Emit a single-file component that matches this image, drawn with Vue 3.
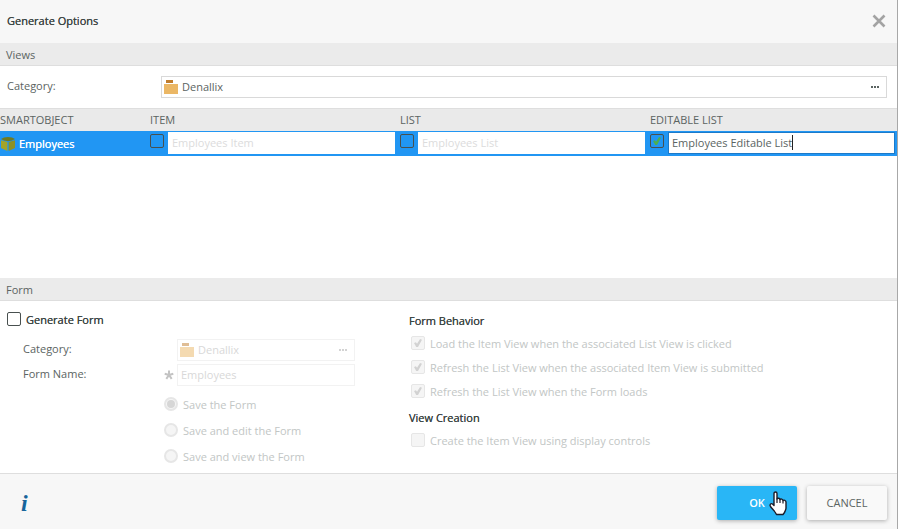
<script setup>
import { ref } from 'vue'

const columns = ref([
  { id: 'item', title: 'Item', value: 'Employees Item', checked: false },
  { id: 'list', title: 'List', value: 'Employees List', checked: false },
  { id: 'editable', title: 'Editable List', value: 'Employees Editable List', checked: true },
])
const generateForm = ref(false)
const afterSave = ref('save')
const saveOptions = [
  { id: 'save', text: 'Save the Form' },
  { id: 'edit', text: 'Save and edit the Form' },
  { id: 'view', text: 'Save and view the Form' },
]
const behaviors = ref([
  { id: 'load', text: 'Load the Item View when the associated List View is clicked', checked: true },
  { id: 'refresh-item', text: 'Refresh the List View when the associated Item View is submitted', checked: true },
  { id: 'refresh-form', text: 'Refresh the List View when the Form loads', checked: true },
])
const displayControls = ref(false)
</script>

<template>
  <main class="dialog">
    <header class="titlebar">
      <h1>Generate Options</h1>
      <button class="close" type="button" aria-label="Close">
        <svg width="14" height="14" viewBox="0 0 14 14"><path d="M1.5 1.500 12.500 12.500M12.500 1.500 1.500 12.500" fill="none" stroke="#a3a3a3" stroke-width="2.600" /></svg>
      </button>
    </header>

    <h2 class="bar">Views</h2>
    <div class="category-row">
      <label for="category">Category:</label>
      <div class="picker">
        <svg class="folder" width="14" height="14" viewBox="0 0 14 14"><path d="M2 0h7v3H2z" fill="#c17d2d" /><path d="M0 4h14v10H0z" fill="#ebb765" /></svg>
        <input id="category" type="text" value="Denallix" />
        <button type="button" aria-label="Browse categories">
          <svg width="8" height="2" viewBox="0 0 8 2"><path d="M0 0h2v2H0zM3 0h2v2H3zM6 0h2v2H6z" fill="#5b6462" /></svg>
        </button>
      </div>
    </div>

    <div class="grid">
      <table>
        <thead>
          <tr>
            <th class="first">SMARTOBJECT</th>
            <th v-for="c in columns" :key="c.id" class="view">{{ c.title.toUpperCase() }}</th>
          </tr>
        </thead>
        <tbody>
          <tr>
            <td>
              <div class="object">
                <svg width="14" height="14" viewBox="0 0 14 14">
                  <path d="M0 2 3 0.5 7 0l4 0.500L14 2 11 3.600 7 4.200 3 3.600z" fill="#6f7a22" />
                  <path d="M0 3.200 6.400 5v9L0 11z" fill="#a3a428" />
                  <path d="M14 3.200 7.600 5v9L14 11z" fill="#8d9124" />
                </svg>
                <span>Employees</span>
              </div>
            </td>
            <td v-for="c in columns" :key="c.id">
              <div class="cell">
                <input v-model="c.checked" class="check" type="checkbox" :aria-label="'Generate ' + c.title" />
                <div class="name" :class="{ active: c.checked }">
                  <input v-model="c.value" type="text" :disabled="!c.checked" :aria-label="c.title + ' name'" />
                  <span v-if="c.checked" class="caret"></span>
                </div>
              </div>
            </td>
          </tr>
        </tbody>
      </table>
    </div>

    <h2 class="bar">Form</h2>
    <div class="form-area">
      <section class="left">
        <label class="option strong">
          <input v-model="generateForm" class="check" type="checkbox" />
          <span>Generate Form</span>
        </label>
        <div class="fields">
          <div class="field">
            <label for="form-category">Category:</label>
            <span class="mark"></span>
            <div class="picker off">
              <svg class="folder" width="14" height="14" viewBox="0 0 14 14"><path d="M2 0h7v3H2z" fill="#c17d2d" /><path d="M0 4h14v10H0z" fill="#ebb765" /></svg>
              <input id="form-category" type="text" value="Denallix" disabled />
              <button type="button" disabled aria-label="Browse form categories">
                <svg width="8" height="2" viewBox="0 0 8 2"><path d="M0 0h2v2H0zM3 0h2v2H3zM6 0h2v2H6z" fill="#a8a8a8" /></svg>
              </button>
            </div>
          </div>
          <div class="field">
            <label for="form-name">Form Name:</label>
            <span class="mark">
              <svg width="10" height="10" viewBox="0 0 10 10"><path d="M5 5V.5M5 5 .7 3.700M5 5l4.300-1.300M5 5 2.300 8.800M5 5l2.700 3.800" fill="none" stroke="#c3c3c3" stroke-width="2" /></svg>
            </span>
            <div class="picker off">
              <input id="form-name" class="plain" type="text" value="Employees" disabled />
            </div>
          </div>
        </div>
        <div class="radios">
          <label v-for="o in saveOptions" :key="o.id" class="option faded">
            <input v-model="afterSave" class="radio" type="radio" name="after-save" :value="o.id" disabled />
            <span>{{ o.text }}</span>
          </label>
        </div>
      </section>

      <section class="right">
        <h3>Form Behavior</h3>
        <div class="checks">
          <label v-for="b in behaviors" :key="b.id" class="option faded">
            <input v-model="b.checked" class="check" type="checkbox" disabled />
            <span>{{ b.text }}</span>
          </label>
        </div>
        <h3>View Creation</h3>
        <div class="checks">
          <label class="option faded">
            <input v-model="displayControls" class="check" type="checkbox" disabled />
            <span>Create the Item View using display controls</span>
          </label>
        </div>
      </section>
    </div>

    <footer>
      <a class="info" href="#" aria-label="Help">i</a>
      <div class="actions">
        <button class="ok" type="button">
          OK
          <svg class="pointer" width="19" height="25" viewBox="0 0 19 25">
            <path d="M5 2.500C5 .5 8 .5 8 2.500V8c.6-1.200 2.800-1 3 .6.700-1 2.800-.7 3 1 .8-.9 3-.4 3 1.400v6c0 2-1 3-1.500 4.500l-1.500 2H7.500L6 21c-.8-1.500-3.500-4-4.500-5.500C.3 13.500 2 12 3.500 13L5 14.500z" fill="#fff" stroke="#1c1c28" stroke-width="1.400" stroke-linejoin="round" />
            <path d="M8 7.500V12M11 8.500V12M14 9.500v3" fill="none" stroke="#1c1c28" stroke-width="1.200" />
          </svg>
        </button>
        <button class="cancel" type="button">CANCEL</button>
      </div>
    </footer>
  </main>
</template>

<style>
body {
  margin: 0;
}
</style>

<style scoped>
* {
  box-sizing: border-box;
}
.dialog {
  display: flex;
  flex-direction: column;
  min-height: 100vh;
  border-right: 1px solid #a8a8a8;
  background: #fff;
  color: #5b6462;
  font: 11px/16px 'Open Sans', 'Noto Sans', sans-serif;
}
input,
button {
  margin: 0;
  padding: 0;
  border: 0;
  background: none;
  color: inherit;
  font: inherit;
}
h1,
h2,
h3 {
  margin: 0;
  font-size: 11px;
  line-height: 16px;
}
h1,
h3,
.strong {
  color: #3c4644;
  font-weight: 500;
  text-shadow: 0 0 0 currentColor;
}
svg {
  display: block;
  flex: none;
}
.titlebar {
  display: flex;
  align-items: center;
  justify-content: space-between;
  height: 43px;
  padding: 0 11px 2px 7px;
  background: #f7f7f7;
}
.bar {
  height: 23px;
  padding: 4px 6px;
  border-bottom: 1px solid #dedede;
  background: #ebebeb;
  font-weight: 400;
}
.category-row {
  display: grid;
  grid-template-columns: 154px 1fr;
  padding: 10px 10px 10px 7px;
}
.category-row label {
  padding-top: 2px;
}
.picker {
  display: flex;
  align-items: center;
  flex: 1;
  height: 22px;
  padding: 0 7px 0 2px;
  border: 1px solid #d9d9d9;
}
.picker input {
  flex: 1;
  min-width: 0;
  height: 20px;
  padding: 0 0 2px 4px;
}
.picker .plain {
  padding-left: 1px;
}
.off {
  opacity: 0.5;
  border-color: #e6e6e6;
  color: #b2b2b2;
}
.grid {
  flex: 1;
  min-height: 170px;
  border-top: 1px solid #dedede;
}
table {
  width: 100%;
  border-collapse: collapse;
  table-layout: fixed;
}
th {
  height: 22px;
  padding: 0;
  background: #eaeaea;
  font-weight: 400;
  text-align: left;
}
.first {
  width: 150px;
}
.view {
  width: 250px;
}
.view:last-child {
  width: auto;
}
td {
  height: 25px;
  padding: 1px 2px 2px 0;
  background: #2196f3;
}
.object {
  display: flex;
  align-items: center;
  gap: 4px;
  padding: 1px 0 0 1px;
  color: #fff;
  font-weight: 500;
  text-shadow: 0 0 0 currentColor;
}
.cell {
  display: flex;
  align-items: flex-start;
  gap: 4px;
  padding-right: 3px;
}
td:last-child .cell {
  padding-right: 0;
}
.cell .check {
  margin-top: 2px;
}
.name {
  position: relative;
  flex: 1;
  height: 22px;
  border: 1px solid #fff;
  background: #fff;
}
.name input {
  display: block;
  width: 100%;
  height: 20px;
  padding: 0 3px 2px;
}
.name input:disabled {
  color: #dcdcdc;
}
.name.active {
  border-color: #1c7ac9;
}
.caret {
  position: absolute;
  top: 2px;
  left: 123px;
  width: 1px;
  height: 15px;
  background: #222;
}
.check,
.radio {
  display: grid;
  place-items: center;
  flex: none;
  width: 14px;
  height: 14px;
  border: 1px solid #48504f;
  border-radius: 2px;
  appearance: none;
}
.check:checked::before {
  width: 8px;
  height: 8px;
  background: #4caf50;
  clip-path: polygon(0 50%, 24% 42%, 38% 60%, 76% 0, 100% 10%, 50% 100%, 28% 100%);
  content: '';
}
.faded .check,
.faded .radio {
  border-color: #e6e6e6;
  background: #f5f5f5;
}
.faded .check:checked::before {
  background: #d2d2d2;
}
.radio {
  border-width: 2px;
  border-radius: 50%;
}
.radio:checked::before {
  width: 8px;
  height: 8px;
  border-radius: 50%;
  background: #d6d6d6;
  content: '';
}
.form-area {
  display: grid;
  grid-template-columns: 402px 1fr;
  padding: 11px 0 8px 7px;
}
.option {
  display: flex;
  gap: 5px;
}
.faded {
  color: #c2c6c5;
}
.fields {
  display: grid;
  gap: 3px;
  padding: 11px 54px 0 16px;
}
.field {
  display: grid;
  grid-template-columns: 141px 13px 1fr;
}
.field label {
  padding-top: 2px;
}
.mark {
  padding-top: 6px;
}
.radios {
  display: grid;
  gap: 10px;
  padding: 11px 0 0 157px;
}
.checks {
  display: grid;
  gap: 8px;
  padding: 7px 0 9px 2px;
}
.right h3 {
  padding-top: 1px;
}
footer {
  display: flex;
  align-items: center;
  justify-content: space-between;
  padding: 12px 10px 10px 21px;
  border-top: 1px solid #dedede;
  background: #f7f7f7;
}
.info {
  color: #17659b;
  font: italic bold 24px/32px 'Liberation Serif', serif;
  text-decoration: none;
}
.actions {
  display: flex;
  gap: 10px;
}
.actions button {
  position: relative;
  width: 80px;
  height: 34px;
  border-radius: 2px;
  box-shadow: 0 1px 4px rgba(0, 0, 0, 0.3);
}
.actions .ok {
  background: #29b6f6;
  color: #fff;
  font-weight: 600;
}
.actions .cancel {
  background: #f9f9f9;
}
.pointer {
  position: absolute;
  top: 5px;
  left: 52px;
}
</style>
